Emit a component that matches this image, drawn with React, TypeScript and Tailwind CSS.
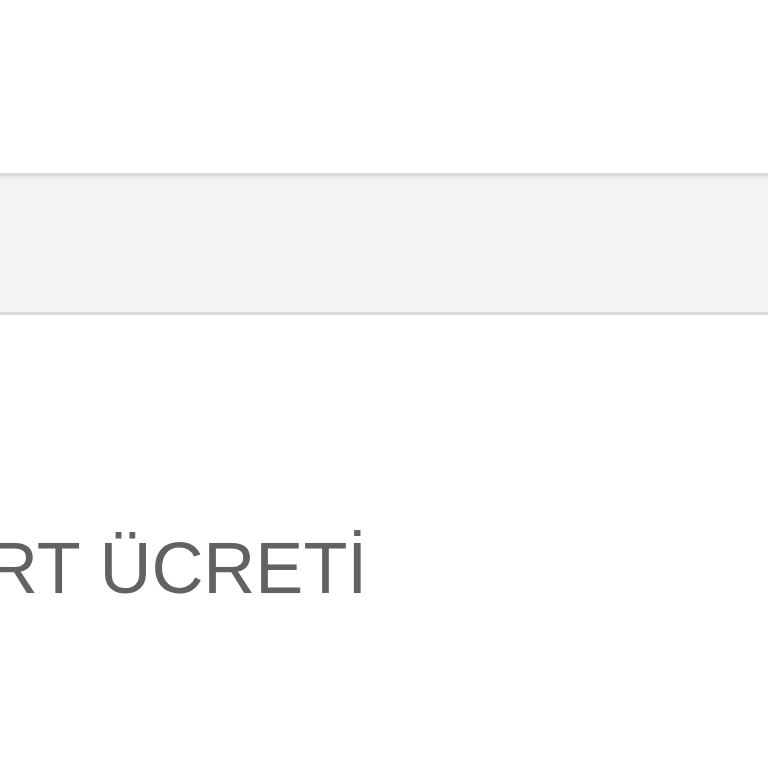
export default function App() {
  return (
    <div className="min-h-[768px] w-full overflow-hidden bg-white font-['Liberation_Sans',Arial,sans-serif]">
      <div className="h-[173px]" />
      {/* grey band */}
      <div className="h-[142px] border-y-[3px] border-[#d9d9d9] bg-[#f3f3f3]">
        <div className="h-[3px] bg-[#ececec]" />
      </div>
      <div className="mt-[217px] ml-[-14px] whitespace-nowrap text-[72px] leading-none text-[#626262]">
        RT ÜCRETİ
      </div>
    </div>
  )
}
